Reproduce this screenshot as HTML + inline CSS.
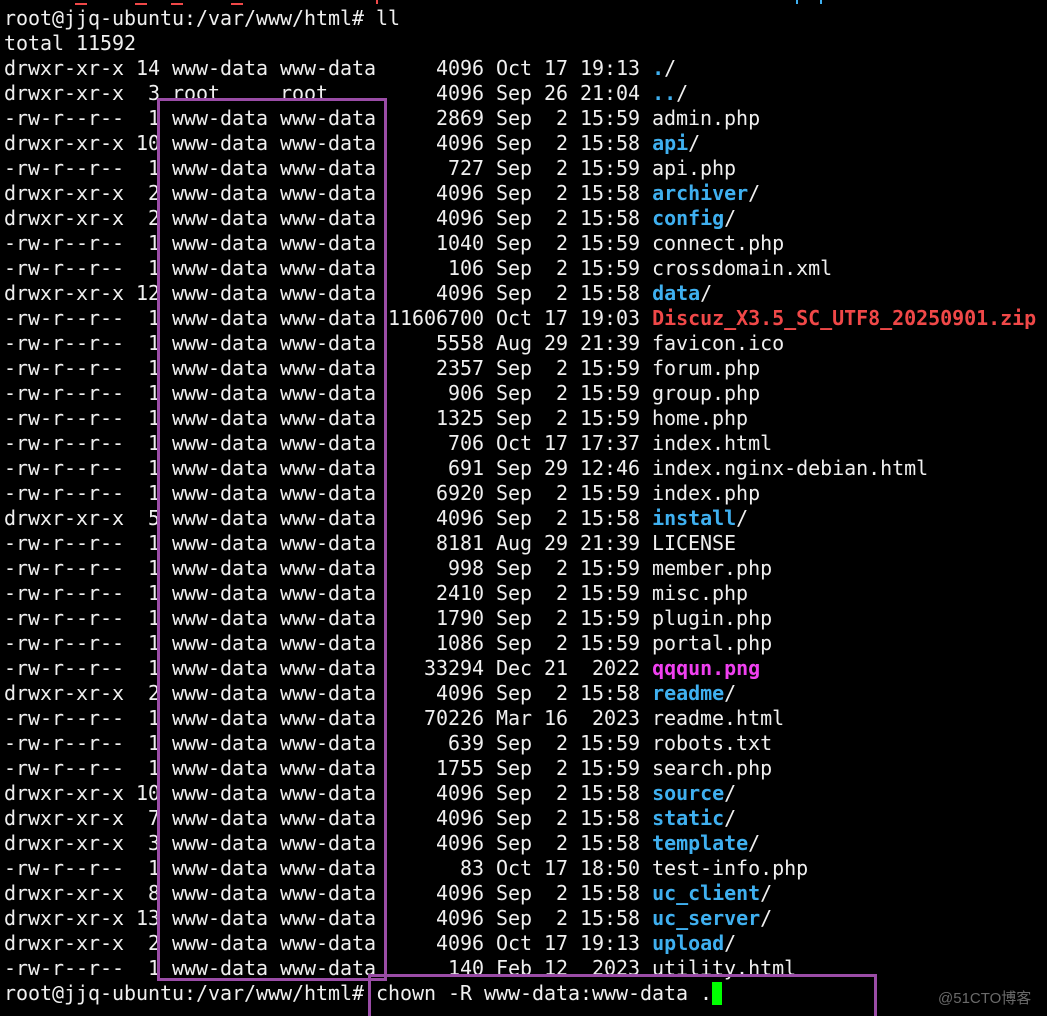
<!DOCTYPE html>
<html><head><meta charset="utf-8"><style>
html,body{margin:0;padding:0;background:#000;width:1047px;height:1016px;overflow:hidden;position:relative}
pre{position:absolute;left:4px;top:6px;margin:0;font-family:"DejaVu Sans Mono","Liberation Mono",monospace;font-size:20px;line-height:25px;color:#f0f0f0;letter-spacing:-0.04px}
.b{color:#3fb0f0;font-weight:bold}.r{color:#f04848;font-weight:bold}.m{color:#f040f0;font-weight:bold}
.box{position:absolute;border:3px solid #9a4ca6;box-sizing:border-box}
.d{position:absolute;background:#f04848}
.cur{display:inline-block;width:10px;height:23px;background:#00ff00;vertical-align:-5px}
.wm{position:absolute;left:938px;top:987px;font-family:"Liberation Sans","Noto Sans CJK SC",sans-serif;font-size:15px;color:#6a6a6a}
</style></head><body>
<div class="d" style="left:75px;top:3px;width:12px;height:2px"></div>
<div class="d" style="left:135px;top:3px;width:12px;height:2px"></div>
<div class="d" style="left:171px;top:3px;width:12px;height:2px"></div>
<div class="d" style="left:231px;top:3px;width:12px;height:2px"></div>
<div class="d" style="left:376px;top:0;width:2px;height:4px"></div>
<div style="position:absolute;left:796px;top:0;width:2px;height:4px;background:#3fb0f0"></div>
<div style="position:absolute;left:820px;top:0;width:2px;height:4px;background:#3fb0f0"></div>
<pre>root@jjq-ubuntu:/var/www/html# ll
total 11592
drwxr-xr-x 14 www-data www-data     4096 Oct 17 19:13 <span class="b">.</span>/
drwxr-xr-x  3 root     root         4096 Sep 26 21:04 <span class="b">..</span>/
-rw-r--r--  1 www-data www-data     2869 Sep  2 15:59 admin.php
drwxr-xr-x 10 www-data www-data     4096 Sep  2 15:58 <span class="b">api</span>/
-rw-r--r--  1 www-data www-data      727 Sep  2 15:59 api.php
drwxr-xr-x  2 www-data www-data     4096 Sep  2 15:58 <span class="b">archiver</span>/
drwxr-xr-x  2 www-data www-data     4096 Sep  2 15:58 <span class="b">config</span>/
-rw-r--r--  1 www-data www-data     1040 Sep  2 15:59 connect.php
-rw-r--r--  1 www-data www-data      106 Sep  2 15:59 crossdomain.xml
drwxr-xr-x 12 www-data www-data     4096 Sep  2 15:58 <span class="b">data</span>/
-rw-r--r--  1 www-data www-data 11606700 Oct 17 19:03 <span class="r">Discuz_X3.5_SC_UTF8_20250901.zip</span>
-rw-r--r--  1 www-data www-data     5558 Aug 29 21:39 favicon.ico
-rw-r--r--  1 www-data www-data     2357 Sep  2 15:59 forum.php
-rw-r--r--  1 www-data www-data      906 Sep  2 15:59 group.php
-rw-r--r--  1 www-data www-data     1325 Sep  2 15:59 home.php
-rw-r--r--  1 www-data www-data      706 Oct 17 17:37 index.html
-rw-r--r--  1 www-data www-data      691 Sep 29 12:46 index.nginx-debian.html
-rw-r--r--  1 www-data www-data     6920 Sep  2 15:59 index.php
drwxr-xr-x  5 www-data www-data     4096 Sep  2 15:58 <span class="b">install</span>/
-rw-r--r--  1 www-data www-data     8181 Aug 29 21:39 LICENSE
-rw-r--r--  1 www-data www-data      998 Sep  2 15:59 member.php
-rw-r--r--  1 www-data www-data     2410 Sep  2 15:59 misc.php
-rw-r--r--  1 www-data www-data     1790 Sep  2 15:59 plugin.php
-rw-r--r--  1 www-data www-data     1086 Sep  2 15:59 portal.php
-rw-r--r--  1 www-data www-data    33294 Dec 21  2022 <span class="m">qqqun.png</span>
drwxr-xr-x  2 www-data www-data     4096 Sep  2 15:58 <span class="b">readme</span>/
-rw-r--r--  1 www-data www-data    70226 Mar 16  2023 readme.html
-rw-r--r--  1 www-data www-data      639 Sep  2 15:59 robots.txt
-rw-r--r--  1 www-data www-data     1755 Sep  2 15:59 search.php
drwxr-xr-x 10 www-data www-data     4096 Sep  2 15:58 <span class="b">source</span>/
drwxr-xr-x  7 www-data www-data     4096 Sep  2 15:58 <span class="b">static</span>/
drwxr-xr-x  3 www-data www-data     4096 Sep  2 15:58 <span class="b">template</span>/
-rw-r--r--  1 www-data www-data       83 Oct 17 18:50 test-info.php
drwxr-xr-x  8 www-data www-data     4096 Sep  2 15:58 <span class="b">uc_client</span>/
drwxr-xr-x 13 www-data www-data     4096 Sep  2 15:58 <span class="b">uc_server</span>/
drwxr-xr-x  2 www-data www-data     4096 Oct 17 19:13 <span class="b">upload</span>/
-rw-r--r--  1 www-data www-data      140 Feb 12  2023 utility.html
root@jjq-ubuntu:/var/www/html# chown -R www-data:www-data .<span class="cur"></span></pre>
<div class="box" style="left:157px;top:98px;width:230px;height:883px"></div>
<div class="box" style="left:368px;top:974px;width:509px;height:45px"></div>
<div class="wm">@51CTO博客</div>
</body></html>
